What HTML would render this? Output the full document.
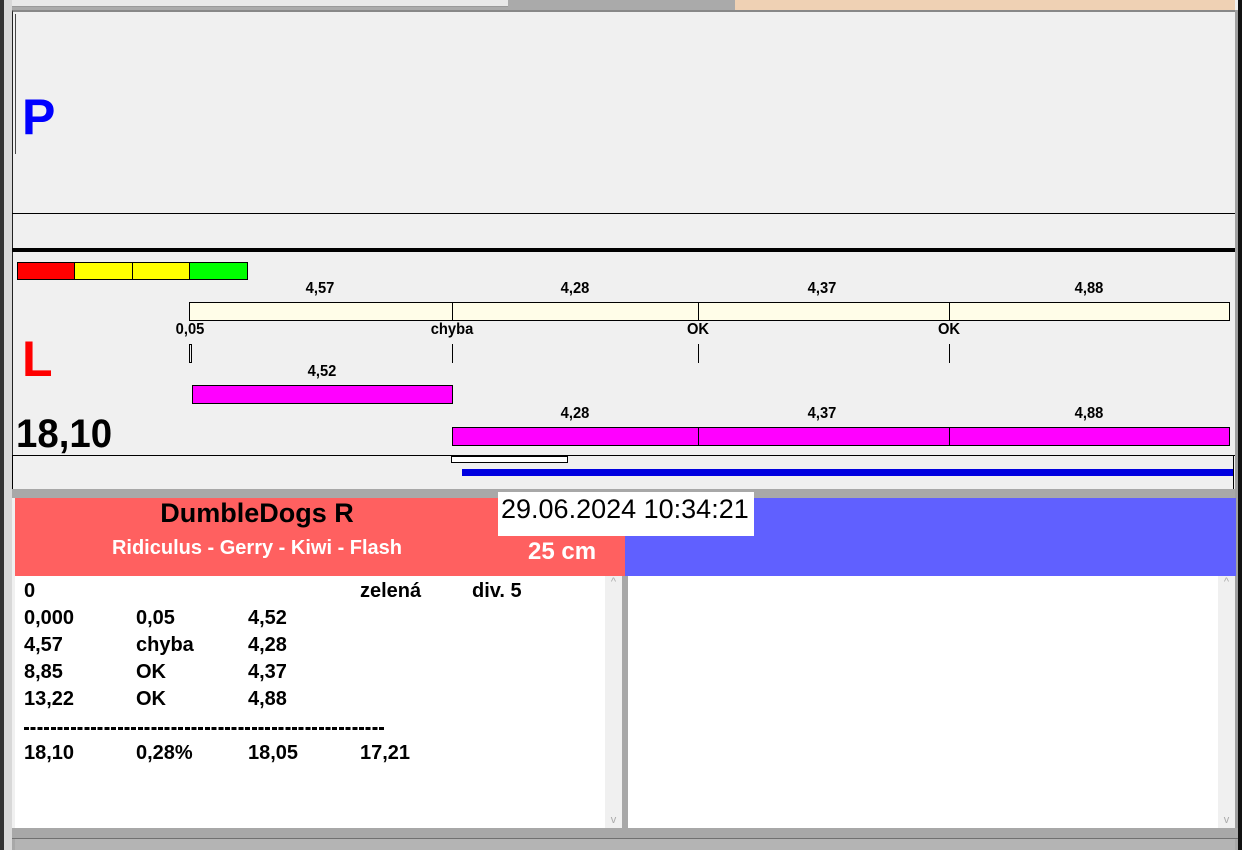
<!DOCTYPE html>
<html><head><meta charset="utf-8"><style>
*{margin:0;padding:0;box-sizing:border-box}
body{width:1242px;height:850px;position:relative;overflow:hidden;background:#f0f0f0;font-family:"Liberation Sans",sans-serif}
.a{position:absolute}
.l{position:absolute;font-weight:bold;font-size:16px;transform:translateX(-50%) scaleX(.92);white-space:nowrap;color:#000}
.t{position:absolute;font-weight:bold;font-size:20px;color:#000;white-space:nowrap}
</style></head><body>
<div class="a" style="left:0;top:0;width:735px;height:10px;background:#aaa"></div>
<div class="a" style="left:8px;top:0;width:500px;height:7px;background:#e8e8e8;border-bottom:1px solid #999"></div>
<div class="a" style="left:735px;top:0;width:500px;height:12px;background:#efd1b4"></div>
<div class="a" style="left:0;top:0;width:4px;height:850px;background:#333"></div>
<div class="a" style="left:4px;top:0;width:8px;height:850px;background:#d8d8d8"></div>
<div class="a" style="left:1235px;top:10px;width:3px;height:840px;background:#a0a0a0"></div>
<div class="a" style="left:1238px;top:0;width:4px;height:850px;background:#111"></div>
<div class="a" style="left:12px;top:10px;width:1223px;height:480px;background:#f0f0f0;border-left:1px solid #222;border-top:2px solid #888"></div>
<div class="a" style="left:15px;top:14px;width:1px;height:140px;border-left:1px solid #000;opacity:.7"></div>
<div class="a" style="left:22px;top:88px;font-size:50px;font-weight:bold;color:#0000ff">P</div>
<div class="a" style="left:12px;top:213px;width:1223px;height:1px;background:#000"></div>
<div class="a" style="left:12px;top:248px;width:1223px;height:4px;background:#000"></div>
<div class="a" style="left:17px;top:262px;width:58px;height:18px;background:#f00;border:1px solid #000"></div>
<div class="a" style="left:74px;top:262px;width:59px;height:18px;background:#ff0;border:1px solid #000"></div>
<div class="a" style="left:132px;top:262px;width:58px;height:18px;background:#ff0;border:1px solid #000"></div>
<div class="a" style="left:189px;top:262px;width:59px;height:18px;background:#0f0;border:1px solid #000"></div>
<div class="a" style="left:189px;top:302px;width:264px;height:19px;background:#fffde8;border:1px solid #000"></div>
<div class="a" style="left:452px;top:302px;width:247px;height:19px;background:#fffde8;border:1px solid #000"></div>
<div class="a" style="left:698px;top:302px;width:252px;height:19px;background:#fffde8;border:1px solid #000"></div>
<div class="a" style="left:949px;top:302px;width:281px;height:19px;background:#fffde8;border:1px solid #000"></div>
<div class="l" style="left:320px;top:280px">4,57</div>
<div class="l" style="left:575px;top:280px">4,28</div>
<div class="l" style="left:822px;top:280px">4,37</div>
<div class="l" style="left:1089px;top:280px">4,88</div>
<div class="l" style="left:190px;top:321px">0,05</div>
<div class="l" style="left:452px;top:321px">chyba</div>
<div class="l" style="left:698px;top:321px">OK</div>
<div class="l" style="left:949px;top:321px">OK</div>
<div class="a" style="left:189px;top:344px;width:3px;height:19px;border:1px solid #000"></div>
<div class="a" style="left:452px;top:344px;width:1px;height:19px;background:#000"></div>
<div class="a" style="left:698px;top:344px;width:1px;height:19px;background:#000"></div>
<div class="a" style="left:949px;top:344px;width:1px;height:19px;background:#000"></div>
<div class="a" style="left:22px;top:330px;font-size:50px;font-weight:bold;color:#f00">L</div>
<div class="l" style="left:322px;top:363px">4,52</div>
<div class="a" style="left:192px;top:385px;width:261px;height:19px;background:#f0f;border:1px solid #000"></div>
<div class="l" style="left:575px;top:405px">4,28</div>
<div class="l" style="left:822px;top:405px">4,37</div>
<div class="l" style="left:1089px;top:405px">4,88</div>
<div class="a" style="left:452px;top:427px;width:247px;height:19px;background:#f0f;border:1px solid #000"></div>
<div class="a" style="left:698px;top:427px;width:252px;height:19px;background:#f0f;border:1px solid #000"></div>
<div class="a" style="left:949px;top:427px;width:281px;height:19px;background:#f0f;border:1px solid #000"></div>
<div class="a" style="left:16px;top:412px;font-size:40px;font-weight:bold;transform-origin:0 0;transform:scaleX(.96)">18,10</div>
<div class="a" style="left:12px;top:455px;width:1223px;height:1px;background:#000"></div>
<div class="a" style="left:12px;top:455px;width:1px;height:35px;background:#000"></div>
<div class="a" style="left:1233px;top:455px;width:1px;height:35px;background:#000"></div>
<div class="a" style="left:451px;top:456px;width:117px;height:7px;background:#fff;border:1px solid #000"></div>
<div class="a" style="left:462px;top:469px;width:771px;height:7px;background:#0000e0"></div>
<div class="a" style="left:12px;top:489px;width:1223px;height:9px;background:#a8a8a8"></div>
<div class="a" style="left:15px;top:498px;width:610px;height:78px;background:#ff6060"></div>
<div class="a" style="left:625px;top:498px;width:611px;height:78px;background:#6060ff"></div>
<div class="a" style="left:257px;top:498px;font-size:27px;font-weight:bold;transform:translateX(-50%);white-space:nowrap">DumbleDogs R</div>
<div class="a" style="left:257px;top:537px;font-size:20px;font-weight:bold;color:#fff;transform:translateX(-50%);white-space:nowrap">Ridiculus - Gerry - Kiwi - Flash</div>
<div class="a" style="left:498px;top:492px;width:256px;height:44px;background:#fff"></div>
<div class="a" style="left:501px;top:494px;font-size:27px;white-space:nowrap">29.06.2024 10:34:21</div>
<div class="a" style="left:528px;top:538px;font-size:24px;font-weight:bold;color:#fff">25 cm</div>
<div class="a" style="left:15px;top:576px;width:590px;height:252px;background:#fff"></div>
<div class="a" style="left:605px;top:576px;width:17px;height:252px;background:#f0f0f0;color:#aaa;font-size:11px;text-align:center">^<div style="position:absolute;bottom:2px;width:17px">v</div></div>
<div class="a" style="left:622px;top:576px;width:6px;height:252px;background:#a8a8a8"></div>
<div class="a" style="left:628px;top:576px;width:590px;height:252px;background:#fff"></div>
<div class="a" style="left:1218px;top:576px;width:17px;height:252px;background:#f0f0f0;color:#aaa;font-size:11px;text-align:center">^<div style="position:absolute;bottom:2px;width:17px">v</div></div>
<div class="t" style="left:24px;top:580px">0</div>
<div class="t" style="left:360px;top:580px">zelená</div>
<div class="t" style="left:472px;top:580px">div. 5</div>
<div class="t" style="left:24px;top:607px">0,000</div><div class="t" style="left:136px;top:607px">0,05</div><div class="t" style="left:248px;top:607px">4,52</div>
<div class="t" style="left:24px;top:634px">4,57</div><div class="t" style="left:136px;top:634px">chyba</div><div class="t" style="left:248px;top:634px">4,28</div>
<div class="t" style="left:24px;top:661px">8,85</div><div class="t" style="left:136px;top:661px">OK</div><div class="t" style="left:248px;top:661px">4,37</div>
<div class="t" style="left:24px;top:688px">13,22</div><div class="t" style="left:136px;top:688px">OK</div><div class="t" style="left:248px;top:688px">4,88</div>
<div class="a" style="left:24px;top:727px;width:361px;height:3px;background:repeating-linear-gradient(90deg,#000 0 5px,transparent 5px 6.7px)"></div>
<div class="t" style="left:24px;top:742px">18,10</div><div class="t" style="left:136px;top:742px">0,28%</div><div class="t" style="left:248px;top:742px">18,05</div><div class="t" style="left:360px;top:742px">17,21</div>
<div class="a" style="left:12px;top:828px;width:1226px;height:22px;background:#a8a8a8"></div>
<div class="a" style="left:12px;top:838px;width:1226px;height:1px;background:#707070"></div>
<div class="a" style="left:15px;top:839px;width:1220px;height:11px;background:#b4b4b4"></div>
</body></html>
